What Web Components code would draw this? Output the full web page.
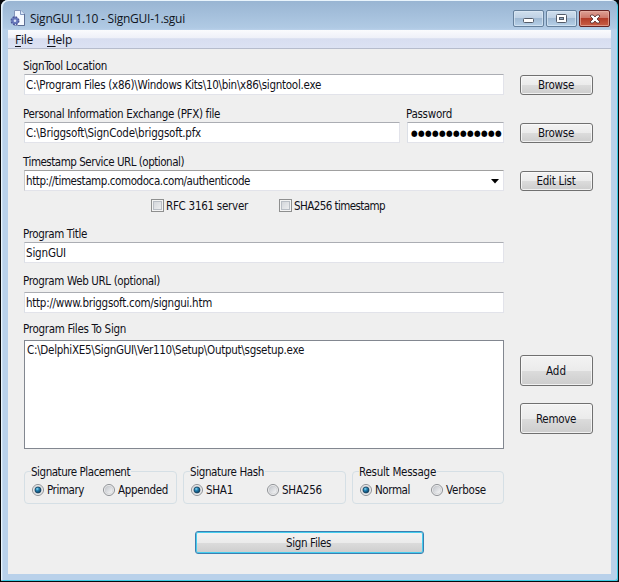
<!DOCTYPE html>
<html lang="en"><head><meta charset="utf-8"><title>SignGUI</title>
<style>html,body{margin:0;background:#08090c;overflow:hidden}body{width:619px;height:582px;font:11.5px/18px "DejaVu Sans Condensed","DejaVu Sans",sans-serif;font-stretch:condensed;color:#101018}</style></head><body>
<sign-window></sign-window>
<script>
const define=(name,html,setup)=>customElements.define(name,class extends HTMLElement{
  connectedCallback(){
    if(this.shadowRoot)return;
    this.attachShadow({mode:'open'}).innerHTML=html;
    if(setup)setup(this,this.shadowRoot);
  }
});
// Single-line text tracked to the width given in its w attribute.
define('fit-text','<style>:host{display:inline-block;white-space:pre;flex:none}span{display:inline-block}</style><span><slot></slot></span>',(h,r)=>{
  const s=r.querySelector('span'),w=+h.getAttribute('w'),n=h.textContent.length;
  const d=(w-s.getBoundingClientRect().width)/n;
  s.style.letterSpacing=d+'px';
});
define('push-button',`<style>:host{display:block;height:20px;width:73px;box-sizing:border-box;flex:none}
button{all:unset;box-sizing:border-box;width:100%;height:100%;display:flex;align-items:center;justify-content:center;padding:0 1px 0 0;border:1px solid #707070;border-radius:3px;background:linear-gradient(#f3f3f3,#ebebeb 50%,#dcdcdc 50%,#cdcdcd);box-shadow:inset 0 0 0 1px #fafafacc}
:host([large]) {height:31px}
:host([primary]){width:229px;height:23px}
:host([primary]) button{border-color:#3c7fb1;padding:1px 2px 0 0;box-shadow:inset 0 0 0 1px #45cdee}</style><button><slot></slot></button>`);
define('text-box',`<style>:host{display:flex;box-sizing:border-box;height:21px;width:var(--w,480px);padding:1px 0 0 1px;align-items:center;justify-content:space-between;background:#fff;border:1px solid #e2e3ea;border-top-color:#abadb3;border-left-color:#dbdfe6}
:host([combo]){border-top-color:#a0a0a0;border-left-color:#c8c8c8;padding-right:4px}
:host([list]){height:109px;border-color:#828790;padding:0 0 0 2px;align-items:flex-start}
svg{display:none}:host([combo]) svg{display:block}</style><slot></slot><svg width="8" height="5"><path d="M0 0H8L4 4.5Z" fill="#000"/></svg>`);
define('form-field',`<style>:host{display:flex;flex-direction:column;gap:var(--g,1px)}label{height:16px;display:block;margin-left:-1px}</style><label><slot name="label"></slot></label><slot></slot>`);
define('form-row',`<style>:host{display:flex;height:48px;box-sizing:border-box}div{display:flex;gap:7px;width:496px}.side{display:block;width:73px;padding-top:18px}</style><div><slot></slot></div><div class="side"><slot name="side"></slot></div>`);
define('check-box',`<style>:host{display:flex;align-items:center;gap:2px}i{width:13px;height:13px;margin-bottom:2px;box-sizing:border-box;border:1px solid #8e8f8f;background:linear-gradient(135deg,#cdd0d5,#f3f4f5);box-shadow:inset 0 0 0 1px #f4f4f4,inset 0 0 0 2px #b9bec5}</style><i></i><slot></slot>`);
define('radio-button',`<style>:host{display:flex;align-items:center;gap:3px}svg{display:block}.on{display:none}:host([checked]) .on{display:inline}</style>
<svg width="12" height="12" viewBox="0 0 12 12"><defs><linearGradient id="g" x2="1" y2="1"><stop stop-color="#bfc3c9"/><stop offset="1" stop-color="#fafafa"/></linearGradient><radialGradient id="b" cx=".38" cy=".32" r=".7"><stop stop-color="#8fdcf5"/><stop offset=".4" stop-color="#2483b4"/><stop offset="1" stop-color="#08385a"/></radialGradient></defs>
<circle cx="6" cy="6" r="5.5" fill="#f4f4f4" stroke="#8c8f94"/><circle cx="6" cy="6" r="4" fill="url(#g)" stroke="#c4c7cb" stroke-width=".5"/><circle class="on" cx="6" cy="6" r="3" fill="url(#b)" stroke="#123e5a" stroke-width=".7"/></svg><slot></slot>`);
define('group-box',`<style>:host{display:block;width:var(--w)}fieldset{box-sizing:border-box;margin:0;width:100%;min-width:0;height:41px;padding:3px 0 0 7px;border:1px solid #d5dfe5;border-radius:4px}
legend{height:16px;margin-left:-1px;padding:0 1px 0 0}.items{display:flex;height:16px;align-items:center;gap:var(--g)}</style><fieldset><legend><slot name="legend"></slot></legend><div class="items"><slot></slot></div></fieldset>`);
define('title-bar',`<style>:host{display:flex;height:28px;padding:0 1px 0 2px;align-items:flex-start}
.icon{margin:8px 4px 0 0;flex:none}fit-text{font:12px/18px "Open Sans","Noto Sans",sans-serif;margin-top:8px;color:#101522}
.controls{display:flex;gap:2px;margin:8px 0 0 auto}
b{box-sizing:border-box;width:31px;height:17px;border:1px solid #65809c;border-radius:2px;background:linear-gradient(#cfdfed,#bdd0e4 48%,#9fb9d3 49%,#b6d0e8);box-shadow:inset 0 0 0 1px #dceaf6aa;display:grid;place-items:center}
.x{border-color:#652323;background:linear-gradient(#dda196,#cd7769 47%,#b13b28 48%,#c95e46);box-shadow:inset 0 0 0 1px #e9b2a6aa}</style>
<svg class="icon" width="16" height="17" viewBox="0 0 16 17"><path d="M4.5.5H11L14.5 4V15.5H4.5Z" fill="#f5f9ff" stroke="#8596b9"/><path d="M10.5.5V4.5H14.5" fill="#dae8fa" stroke="#8197bf"/><path d="M14.5 4V15.5H8" fill="none" stroke="#5d6e94"/><circle cx="5" cy="10.8" r="3.5" fill="#6673b7" stroke="#4c579b" stroke-width="2" stroke-dasharray="1.7 1.05"/><circle cx="5" cy="10.8" r="3" fill="#6979bc"/><circle cx="5" cy="10.8" r="1.3" fill="#dbe4f6"/></svg>
<fit-text w="155">SignGUI 1.10 - SignGUI-1.sgui</fit-text>
<div class="controls"><b><svg width="12" height="11"><rect x=".5" y="5.5" width="10" height="4" rx="1" fill="#fff" stroke="#535b68"/></svg></b><b><svg width="11" height="9"><rect x=".5" y=".5" width="10" height="8" rx="1" fill="#fff" stroke="#535b68"/><rect x="3.5" y="3.5" width="4" height="2" fill="#91a9c1" stroke="#535b68"/></svg></b><b class="x"><svg width="12" height="10"><path d="M2 1H4.2L6 3L7.8 1H10L11 2L8 5L11 8L10 9H7.8L6 7L4.2 9H2L1 8L4 5L1 2Z" fill="#fff" stroke="#5e3537" stroke-width=".9"/></svg></b></div>`);
define('menu-bar',`<style>:host{display:flex;box-sizing:border-box;height:19px;padding:1px 0 0 7px;gap:14px;font:12px/18px "Open Sans","Noto Sans",sans-serif;background:linear-gradient(#fafbfd,#eef0f8 45%,#d8def0 48%,#dce2f3);border-bottom:1px solid #b6bccc}u{text-underline-offset:2px}</style><fit-text w="18"><u>F</u>ile</fit-text><fit-text w="25"><u>H</u>elp</fit-text>`);
define('sign-window',`<style>:host{display:block;box-sizing:border-box;width:617px;height:581px;margin-left:1px;padding:2px 7px 7px;border-radius:7px 7px 2px 2px;background:linear-gradient(#98b4d2 0,#b0cae4 28px,#b9d1ea 30px);box-shadow:inset 1px 1px 0 #e9f4fc,inset -1px -1px 0 #3ccbe4,inset 2px 0 0 #c8ddf1}
main{display:block;box-sizing:border-box;height:525px;padding:8px 17px 0 16px;background:#efefef}
.checks{display:flex;gap:31px;height:34px;box-sizing:border-box;padding:6px 0 0 127px;align-items:flex-start}
.files{display:flex;gap:16px;height:129px}.actions{display:flex;flex-direction:column;gap:17px;padding-top:35px}
.groups{display:flex;gap:6px;margin-top:14px}
.secret{font-size:8.5px;margin-left:2px;color:#000}
footer{padding:27px 0 0 171px}</style>
<title-bar></title-bar><menu-bar></menu-bar><main>
<form-row><form-field><fit-text slot="label" w="84">SignTool Location</fit-text><text-box><fit-text w="295">C:\\Program Files (x86)\\Windows Kits\\10\\bin\\x86\\signtool.exe</fit-text></text-box></form-field><push-button slot="side"><fit-text w="36">Browse</fit-text></push-button></form-row>
<form-row><form-field><fit-text slot="label" w="197">Personal Information Exchange (PFX) file</fit-text><text-box style="--w:376px"><fit-text w="175">C:\\Briggsoft\\SignCode\\briggsoft.pfx</fit-text></text-box></form-field><form-field><fit-text slot="label" w="46">Password</fit-text><text-box style="--w:97px"><fit-text class="secret" w="91">●●●●●●●●●●●●●</fit-text></text-box></form-field><push-button slot="side"><fit-text w="36">Browse</fit-text></push-button></form-row>
<form-row style="height:38px"><form-field><fit-text slot="label" w="161">Timestamp Service URL (optional)</fit-text><text-box combo><fit-text w="224">http://timestamp.comodoca.com/authenticode</fit-text></text-box></form-field><push-button slot="side"><fit-text w="39">Edit List</fit-text></push-button></form-row>
<div class="checks"><check-box><fit-text w="82">RFC 3161 server</fit-text></check-box><check-box><fit-text w="91">SHA256 timestamp</fit-text></check-box></div>
<form-row style="height:47px"><form-field><fit-text slot="label" w="64">Program Title</fit-text><text-box><fit-text w="40">SignGUI</fit-text></text-box></form-field></form-row>
<form-row style="--g:4px"><form-field><fit-text slot="label" w="137">Program Web URL (optional)</fit-text><text-box><fit-text w="186">http://www.briggsoft.com/signgui.htm</fit-text></text-box></form-field></form-row>
<div class="files" style="--g:4px"><form-field><fit-text slot="label" w="103">Program Files To Sign</fit-text><text-box list><fit-text w="277">C:\\DelphiXE5\\SignGUI\\Ver110\\Setup\\Output\\sgsetup.exe</fit-text></text-box></form-field><div class="actions"><push-button large><fit-text w="20">Add</fit-text></push-button><push-button large><fit-text w="40">Remove</fit-text></push-button></div></div>
<div class="groups"><group-box style="--w:153px;--g:19px"><fit-text slot="legend" w="99">Signature Placement</fit-text><radio-button checked><fit-text w="37">Primary</fit-text></radio-button><radio-button><fit-text w="50">Appended</fit-text></radio-button></group-box>
<group-box style="--w:163px;--g:34px"><fit-text slot="legend" w="74">Signature Hash</fit-text><radio-button checked><fit-text w="27">SHA1</fit-text></radio-button><radio-button><fit-text w="40">SHA256</fit-text></radio-button></group-box>
<group-box style="--w:152px;--g:21px"><fit-text slot="legend" w="77">Result Message</fit-text><radio-button checked><fit-text w="35">Normal</fit-text></radio-button><radio-button><fit-text w="40">Verbose</fit-text></radio-button></group-box></div>
<footer><push-button primary><fit-text w="45">Sign Files</fit-text></push-button></footer></main>`);
</script></body></html>
